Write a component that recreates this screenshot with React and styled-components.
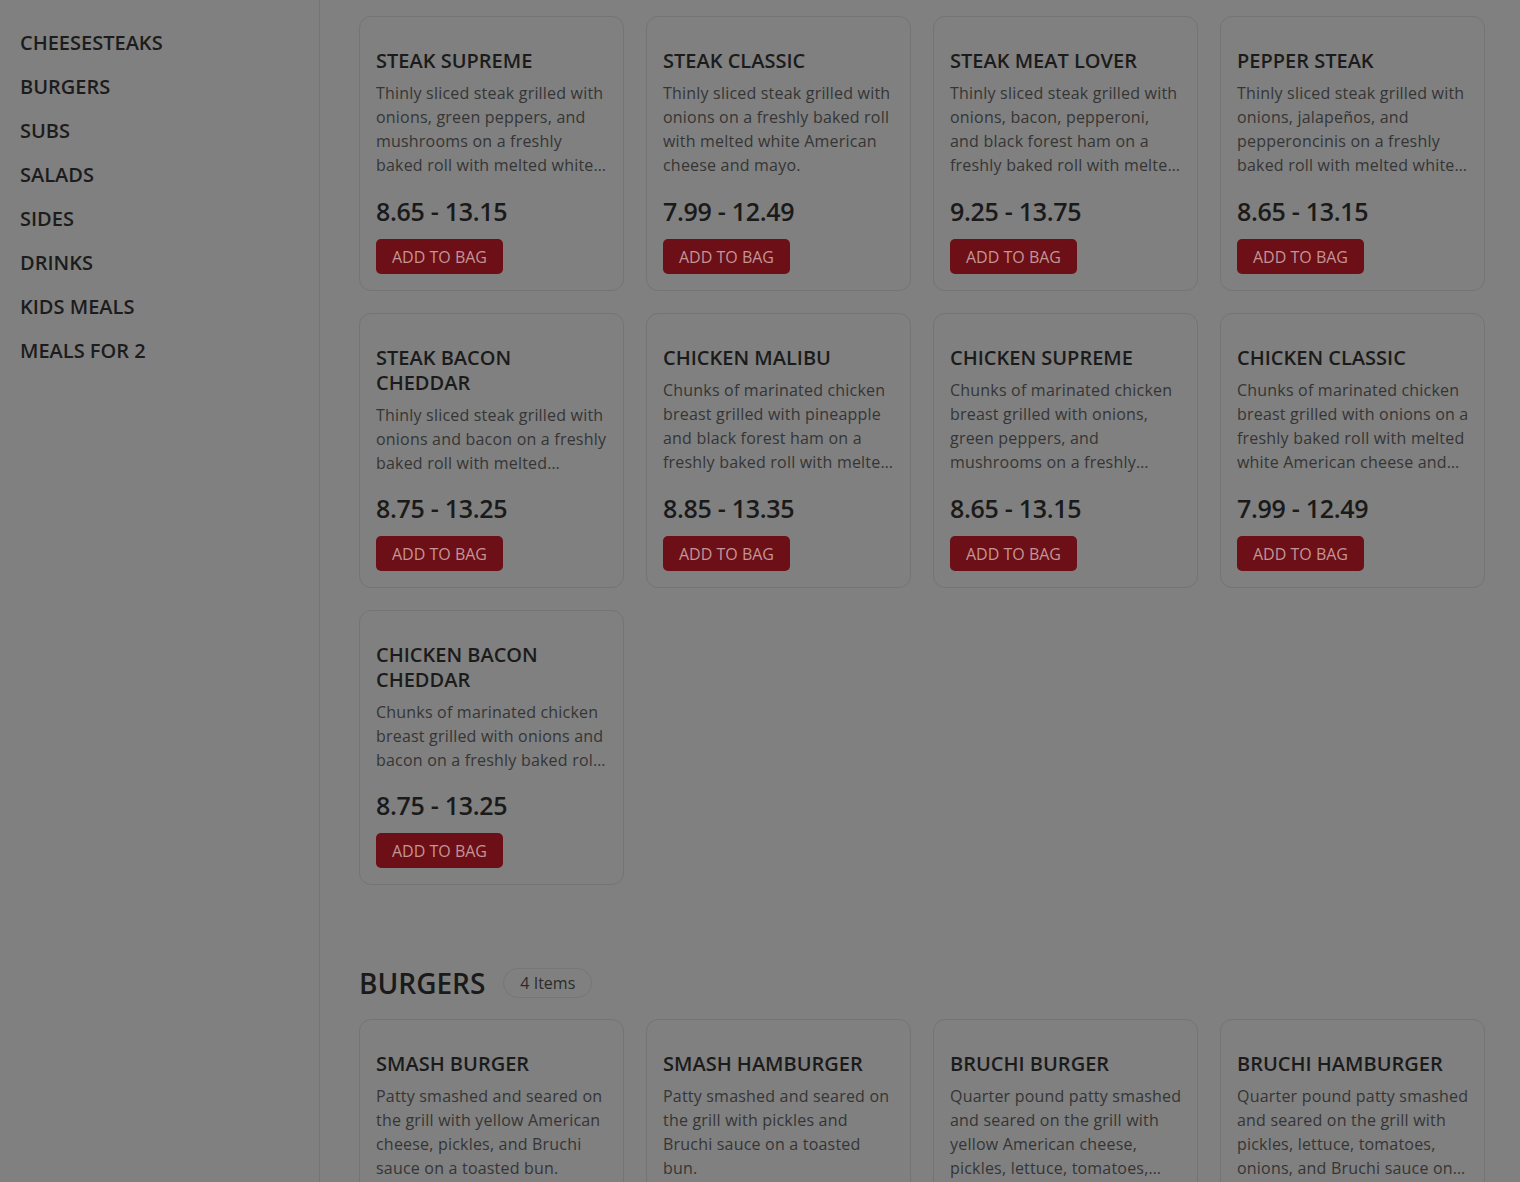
import React from 'react';
import styled, { createGlobalStyle } from 'styled-components';

// The page sits behind a dimmed backdrop, so every colour here is the dimmed one.

const GlobalStyle = createGlobalStyle`
  html, body {
    margin: 0;
    padding: 0;
    height: 100%;
    overflow: hidden;
    background: #808080;
    font-family: "Open Sans", "Noto Sans", Arial, sans-serif;
  }
  * { box-sizing: border-box; }
`;

const categories = ['CHEESESTEAKS', 'BURGERS', 'SUBS', 'SALADS', 'SIDES', 'DRINKS', 'KIDS MEALS', 'MEALS FOR 2'];

const cheesesteaks = [
  { name: 'STEAK SUPREME', price: '8.65 - 13.15', desc: 'Thinly sliced steak grilled with onions, green peppers, and mushrooms on a freshly baked roll with melted white American cheese and mayo.' },
  { name: 'STEAK CLASSIC', price: '7.99 - 12.49', desc: 'Thinly sliced steak grilled with onions on a freshly baked roll with melted white American cheese and mayo.' },
  { name: 'STEAK MEAT LOVER', price: '9.25 - 13.75', desc: 'Thinly sliced steak grilled with onions, bacon, pepperoni, and black forest ham on a freshly baked roll with melted white American cheese and mayo.' },
  { name: 'PEPPER STEAK', price: '8.65 - 13.15', desc: 'Thinly sliced steak grilled with onions, jalapeños, and pepperoncinis on a freshly baked roll with melted white American cheese and mayo.' },
  { name: 'STEAK BACON CHEDDAR', price: '8.75 - 13.25', lines: 3, desc: 'Thinly sliced steak grilled with onions and bacon on a freshly baked roll with melted cheddar cheese and mayo.' },
  { name: 'CHICKEN MALIBU', price: '8.85 - 13.35', desc: 'Chunks of marinated chicken breast grilled with pineapple and black forest ham on a freshly baked roll with melted white American cheese and mayo.' },
  { name: 'CHICKEN SUPREME', price: '8.65 - 13.15', desc: 'Chunks of marinated chicken breast grilled with onions, green peppers, and mushrooms on a freshly baked roll with melted white American cheese and mayo.' },
  { name: 'CHICKEN CLASSIC', price: '7.99 - 12.49', desc: 'Chunks of marinated chicken breast grilled with onions on a freshly baked roll with melted white American cheese and mayo.' },
  { name: 'CHICKEN BACON CHEDDAR', price: '8.75 - 13.25', lines: 3, desc: 'Chunks of marinated chicken breast grilled with onions and bacon on a freshly baked roll with melted cheddar cheese and mayo.' },
];

const burgers = [
  { name: 'SMASH BURGER', price: '6.99', desc: 'Patty smashed and seared on the grill with yellow American cheese, pickles, and Bruchi sauce on a toasted bun.' },
  { name: 'SMASH HAMBURGER', price: '6.49', desc: 'Patty smashed and seared on the grill with pickles and Bruchi sauce on a toasted bun.' },
  { name: 'BRUCHI BURGER', price: '8.49', desc: 'Quarter pound patty smashed and seared on the grill with yellow American cheese, pickles, lettuce, tomatoes, onions, and Bruchi sauce on a toasted bun.' },
  { name: 'BRUCHI HAMBURGER', price: '7.99', desc: 'Quarter pound patty smashed and seared on the grill with pickles, lettuce, tomatoes, onions, and Bruchi sauce on a toasted bun.' },
];

const MenuCard = ({ item }) => (
  <Card>
    <Title>{ item.name }</Title>
    <Desc $lines={ item.lines || 4 }>{ item.desc }</Desc>
    <Price>{ item.price }</Price>
    <AddButton>ADD TO BAG</AddButton>
  </Card>
);

export default function App() {
  return (
    <>
      <GlobalStyle />
      <Page>
        <Sidebar>
          { categories.map((c) => <NavItem key={ c }>{ c }</NavItem>) }
        </Sidebar>
        <Main>
          <Grid>
            { cheesesteaks.map((item) => <MenuCard key={ item.name } item={ item } />) }
          </Grid>
          <Section>
            <SectionHead>
              <SectionTitle>BURGERS</SectionTitle>
              <Count>4 Items</Count>
            </SectionHead>
            <Grid>
              { burgers.map((item) => <MenuCard key={ item.name } item={ item } />) }
            </Grid>
          </Section>
        </Main>
      </Page>
    </>
  );
}

const Page = styled.div`
  display: flex;
  height: 100vh;
  overflow: hidden;
`;

const Sidebar = styled.nav`
  width: 320px;
  flex-shrink: 0;
  border-right: 1px solid #757575;
  padding: 29px 20px;
  display: flex;
  flex-direction: column;
  gap: 16px;
`;

const NavItem = styled.div`
  font-size: 20px;
  font-weight: 600;
  line-height: 28px;
  color: #1c1c1c;
`;

const Main = styled.main`
  flex: 1;
  padding: 16px 35px 0 39px;
`;

const Grid = styled.div`
  display: grid;
  grid-template-columns: repeat(4, 1fr);
  gap: 22px;
`;

const Section = styled.section`
  margin-top: 80px;
`;

const SectionHead = styled.div`
  display: flex;
  align-items: center;
  gap: 18px;
  margin-bottom: 18px;
`;

const SectionTitle = styled.h2`
  margin: 0;
  font-size: 28px;
  font-weight: 600;
  line-height: 36px;
  color: #1a1a1a;
`;

const Count = styled.span`
  display: inline-flex;
  align-items: center;
  height: 30px;
  padding: 0 16px;
  border: 1px solid #767676;
  border-radius: 15px;
  font-size: 16px;
  color: #2b2b2b;
`;

const Card = styled.div`
  height: 275px;
  border: 1px solid #747474;
  border-radius: 12px;
  padding: 31px 15px 16px 16px;
  display: flex;
  flex-direction: column;
  align-items: flex-start;
`;

const Title = styled.div`
  font-size: 20px;
  font-weight: 600;
  line-height: 25px;
  color: #1b1b1b;
  margin-bottom: 8px;
`;

const Desc = styled.div`
  font-size: 16px;
  line-height: 24px;
  letter-spacing: 0.2px;
  color: #353535;
  display: -webkit-box;
  -webkit-box-orient: vertical;
  -webkit-line-clamp: ${ (p) => p.$lines };
  overflow: hidden;
`;

const Price = styled.div`
  margin-top: auto;
  font-size: 25px;
  font-weight: 600;
  line-height: 32px;
  color: #1a1a1a;
  letter-spacing: -0.3px;
`;

const AddButton = styled.button`
  margin-top: 12px;
  height: 35px;
  padding: 0 16px;
  border: none;
  border-radius: 5px;
  background: #6c0f16;
  color: #c39597;
  font-family: inherit;
  font-size: 16px;
  cursor: pointer;
`;
